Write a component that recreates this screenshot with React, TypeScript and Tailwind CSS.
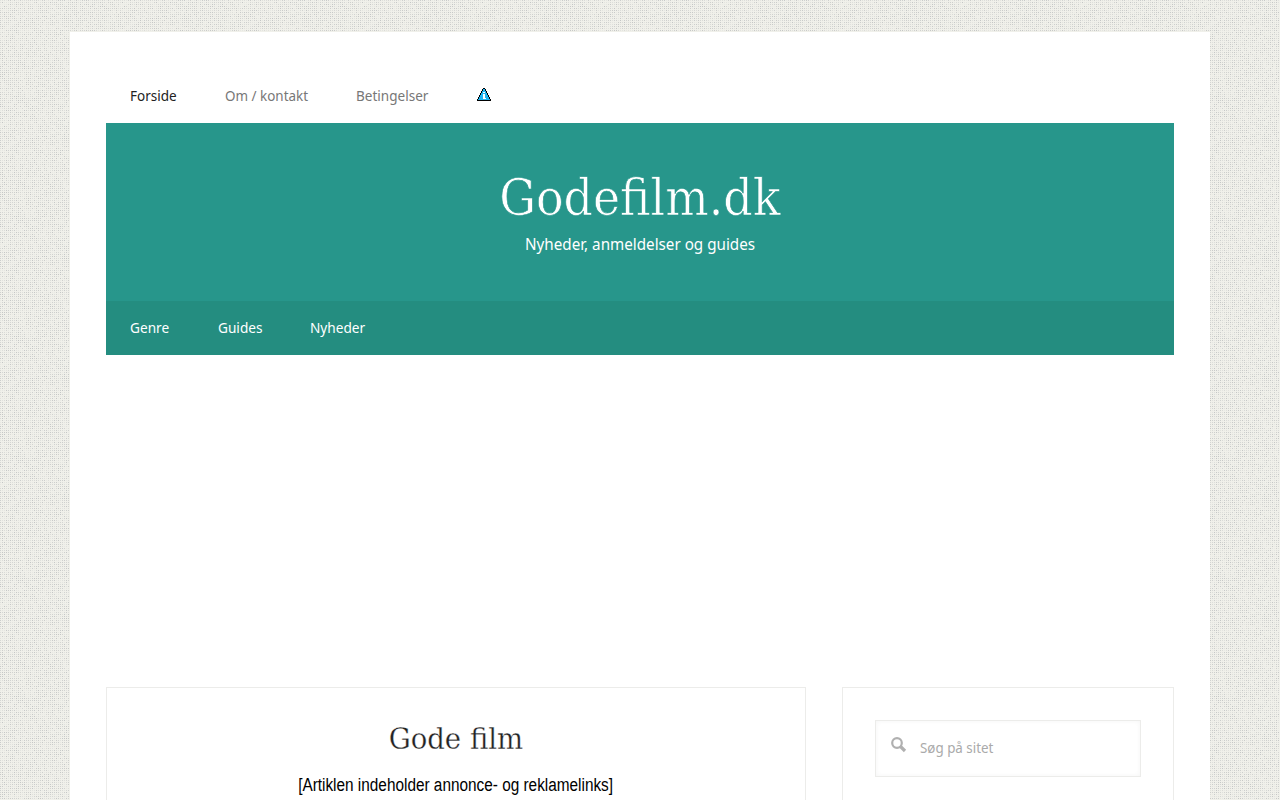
const TILE = 120;

// Small seeded generator so the paper texture is the same on every render
function createRandom(seed: number) {
  let value = seed;
  return () => {
    value = (value * 1664525 + 1013904223) % 4294967296;
    return value / 4294967296;
  };
}

function buildTexture() {
  const random = createRandom(11);
  const dots = [];
  for (let y = 0; y < TILE; y += 2) {
    for (let x = 0; x < TILE; x += 2) {
      dots.push({ x, y, opacity: 0.15 + random() * 0.75 });
    }
  }
  return dots;
}

const texture = buildTexture();

const topLinks = [
  { label: "Forside", className: "w-[95px]", text: "text-[#222] scale-x-[0.965]" },
  { label: "Om / kontakt", className: "w-[131px]", text: "text-[#777] scale-x-[0.96]" },
  { label: "Betingelser", className: "w-[121px]", text: "text-[#777] scale-x-[0.968]" },
];

const mainLinks = [
  { label: "Genre", className: "w-[88px]" },
  { label: "Guides", className: "w-[92px]" },
  { label: "Nyheder", className: "w-[103px]" },
];

function Texture() {
  return (
    <svg className="absolute inset-0 h-full w-full" aria-hidden="true" shapeRendering="crispEdges">
      <defs>
        <pattern id="paper" width={TILE} height={TILE} patternUnits="userSpaceOnUse">
          {texture.map((dot) => (
            <rect
              key={`${dot.x}-${dot.y}`}
              x={dot.x}
              y={dot.y}
              width="1"
              height="1"
              fill="#bfc1c1"
              opacity={dot.opacity}
            />
          ))}
        </pattern>
      </defs>
      <rect width="100%" height="100%" fill="url(#paper)" />
    </svg>
  );
}

function WarningIcon() {
  return (
    <svg width="14" height="13" viewBox="0 0 14 13" shapeRendering="crispEdges">
      <path
        fill="#000"
        d="M6 0h2v1h1v2h1v2h1v2h1v2h1v2h1v2H0v-2h1V9h1V7h1V5h1V3h1V1h1z"
      />
      <path fill="#21b6f3" d="M6 1h2v2h1v2h1v2h1v2h1v2h1v1H1v-1h1V9h1V7h1V5h1V3h1z" />
      <path fill="#fff" d="M6 4h2v1H6zM6 6h2v4h1v1H6z" />
    </svg>
  );
}

function SearchIcon() {
  return (
    <svg className="-mt-2" width="16" height="16" viewBox="0 0 16 16" fill="none" stroke="#b0b0b0">
      <circle cx="6" cy="6" r="4.8" strokeWidth="2.2" />
      <path d="M9.5 9.5l4.5 4.5" strokeWidth="3.2" />
    </svg>
  );
}

export default function App() {
  return (
    <div className="relative h-screen overflow-hidden bg-[#f0f0ea] font-['Droid_Sans','Noto_Sans',sans-serif] text-[#222]">
      <Texture />
      <div className="relative mx-auto mt-8 h-[768px] w-[1140px] bg-white px-9 pt-9">
        <nav className="flex h-[55px] items-center pl-6 text-sm">
          {topLinks.map((link) => (
            <div key={link.label} className={link.className}>
              <a href="#" className={`inline-block origin-left whitespace-nowrap ${link.text}`}>
                {link.label}
              </a>
            </div>
          ))}
          <a href="#" className="-mt-0.5">
            <WarningIcon />
          </a>
        </nav>
        <header className="h-[178px] bg-[#27968b] pt-11 text-center text-white">
          <h1 className="font-['Roboto_Slab','DejaVu_Serif_Condensed','DejaVu_Serif',serif] text-[50px] leading-[62px] font-light [-webkit-text-stroke:0.6px_#27968b]">
            <span className="inline-block scale-x-[1.02]">Godefilm.dk</span>
          </h1>
          <p className="mt-0.5 text-base leading-[26px]">
            <span className="inline-block scale-x-[0.95]">Nyheder, anmeldelser og guides</span>
          </p>
        </header>
        <nav className="flex h-[54px] items-center bg-[#248d80] pl-6 text-sm text-white">
          {mainLinks.map((link) => (
            <div key={link.label} className={link.className}>
              <a href="#" className="inline-block origin-left scale-x-[0.975]">
                {link.label}
              </a>
            </div>
          ))}
        </nav>
        <div className="mt-[332px] flex items-start gap-9">
          <main className="h-[200px] w-[700px] border border-[#ececea] pt-[31px] text-center">
            <h2 className="font-['Roboto_Slab','DejaVu_Serif_Condensed','DejaVu_Serif',serif] text-[30px] leading-10 font-light [-webkit-text-stroke:0.3px_#fff]">
              <span className="inline-block scale-x-[1.02]">Gode film</span>
            </h2>
            <p className="mt-3 font-['Liberation_Sans_Narrow','Liberation_Sans',sans-serif] text-lg leading-7 text-black">
              <span className="inline-block scale-x-[0.853]">
                [Artiklen indeholder annonce- og reklamelinks]
              </span>
            </p>
          </main>
          <aside className="h-[200px] w-[332px] border border-[#ececea] p-8">
            <div className="flex h-[57px] items-center border border-[#ececea] pl-[15px] shadow-[inset_0_0_5px_#f5f5f5]">
              <SearchIcon />
              <input
                type="text"
                placeholder="Søg på sitet"
                className="-mt-0.5 ml-[13px] w-[200px] origin-left scale-x-[0.955] text-sm outline-none placeholder:text-[#aaa]"
              />
            </div>
          </aside>
        </div>
      </div>
    </div>
  );
}
